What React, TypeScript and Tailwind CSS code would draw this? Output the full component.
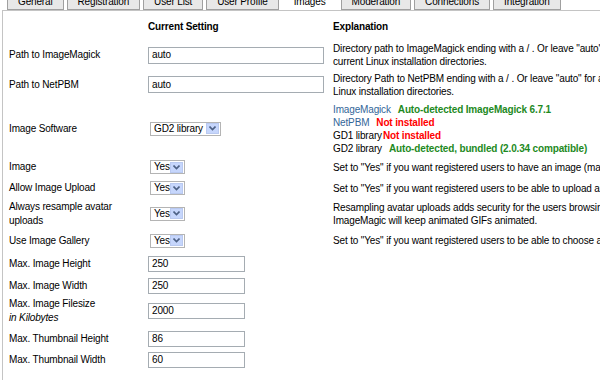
import React from 'react';

// Admin settings: "Images" tab
const tabs = ['General', 'Registration', 'User List', 'User Profile', 'Images', 'Moderation', 'Connections', 'Integration'];

const TextInput: React.FC<{ value: string; wide?: boolean }> = ({ value, wide }) => (
  <div
    className={`flex items-center bg-white border border-[#a5acb2] pl-[3px] leading-none text-black ${wide ? 'w-[176px] h-[17px]' : 'w-[97px] h-[16px]'}`}
  >
    {value}
  </div>
);

const Select: React.FC<{ value: string; width: string }> = ({ value, width }) => (
  <div className={`ml-[2px] flex items-center justify-between bg-white border border-[#b4b4b4] h-[14px] pl-[3px] pr-[1px] leading-none text-black whitespace-nowrap ${width}`}>
    <span>{value}</span>
    <span className="flex shrink-0 items-center justify-center w-[13px] h-[11px] bg-[#c6d6fc] border border-[#b9c9f0]">
      <svg width="7" height="5" viewBox="0 0 7 5">
        <path d="M0.5 0.5 L3.5 3.5 L6.5 0.5" fill="none" stroke="#4d6185" strokeWidth="1.6" />
      </svg>
    </span>
  </div>
);

interface RowProps {
  h: string;
  label: React.ReactNode;
  control?: React.ReactNode;
  explain?: React.ReactNode;
}

const Row: React.FC<RowProps> = ({ h, label, control, explain }) => (
  <div className={`flex items-center ${h}`}>
    <div className="w-[145px] shrink-0 pl-[6px] leading-[14px] whitespace-nowrap">{label}</div>
    <div className="w-[185px] shrink-0">{control}</div>
    <div className="flex-1 min-w-0 whitespace-nowrap leading-[13px]">{explain}</div>
  </div>
);

export default function App() {
  return (
    <div className="w-[600px] h-[380px] overflow-hidden bg-white text-[10px] tracking-[-0.15px] text-black" style={{ fontFamily: '"Liberation Sans", Arial, sans-serif' }}>
      <div className="flex items-end gap-[3px] pl-[7px] -mt-[7px] h-[17px] whitespace-nowrap">
        {tabs.map((t) =>
          t === 'Images' ? (
            <div key={t} className="shrink-0 px-[12px] h-[17px] flex items-center bg-white">{t}</div>
          ) : (
            <div key={t} className="shrink-0 px-[10px] h-[16px] flex items-center bg-[#e8e8e8] border-x border-b border-[#a0a0a0]">{t}</div>
          )
        )}
      </div>
      <div className="ml-[2px] border-l border-t border-[#c4c4c4] h-[400px]">
        <Row
          h="h-[31px]"
          label=""
          control={<span className="font-bold">Current Setting</span>}
          explain={<span className="font-bold">Explanation</span>}
        />
        <Row
          h="h-[26px]"
          label="Path to ImageMagick"
          control={<TextInput value="auto" wide />}
          explain={<>Directory path to ImageMagick ending with a / . Or leave "auto" to search the<br />current Linux installation directories.</>}
        />
        <Row
          h="h-[33px]"
          label="Path to NetPBM"
          control={<TextInput value="auto" wide />}
          explain={<>Directory Path to NetPBM ending with a / . Or leave "auto" for auto-detecting in the<br />Linux installation directories.</>}
        />
        <Row
          h="h-[55px]"
          label="Image Software"
          control={<Select value="GD2 library" width="w-[71px]" />}
          explain={
            <div className="flex flex-col">
              <div><span className="text-[#336699]">ImageMagick</span><span className="ml-[7px] font-bold text-[#1e8a1e]">Auto-detected ImageMagick 6.7.1</span></div>
              <div><span className="text-[#336699]">NetPBM</span><span className="ml-[7px] font-bold text-[#ff0000]">Not installed</span></div>
              <div><span>GD1 library</span><span className="ml-[1px] font-bold text-[#ff0000]">Not installed</span></div>
              <div><span>GD2 library</span><span className="ml-[7px] font-bold text-[#1e8a1e]">Auto-detected, bundled (2.0.34 compatible)</span></div>
            </div>
          }
        />
        <Row
          h="h-[22px]"
          label="Image"
          control={<Select value="Yes" width="w-[35px]" />}
          explain={<>Set to "Yes" if you want registered users to have an image (may it be an avatar or a photo).</>}
        />
        <Row
          h="h-[20px]"
          label="Allow Image Upload"
          control={<Select value="Yes" width="w-[35px]" />}
          explain={<>Set to "Yes" if you want registered users to be able to upload an image.</>}
        />
        <Row
          h="h-[31px]"
          label={<>Always resample avatar<br />uploads</>}
          control={<Select value="Yes" width="w-[35px]" />}
          explain={<>Resampling avatar uploads adds security for the users browsing the forum, as<br />ImageMagic will keep animated GIFs animated.</>}
        />
        <Row
          h="h-[23px]"
          label="Use Image Gallery"
          control={<Select value="Yes" width="w-[35px]" />}
          explain={<>Set to "Yes" if you want registered users to be able to choose an avatar from the gallery.</>}
        />
        <Row h="h-[24px]" label="Max. Image Height" control={<TextInput value="250" />} />
        <Row h="h-[19px]" label="Max. Image Width" control={<TextInput value="250" />} />
        <Row
          h="h-[32px]"
          label={<>Max. Image Filesize<br /><i>in Kilobytes</i></>}
          control={<TextInput value="2000" />}
        />
        <Row h="h-[24px]" label="Max. Thumbnail Height" control={<TextInput value="86" />} />
        <Row h="h-[17px]" label="Max. Thumbnail Width" control={<TextInput value="60" />} />
      </div>
    </div>
  );
}
